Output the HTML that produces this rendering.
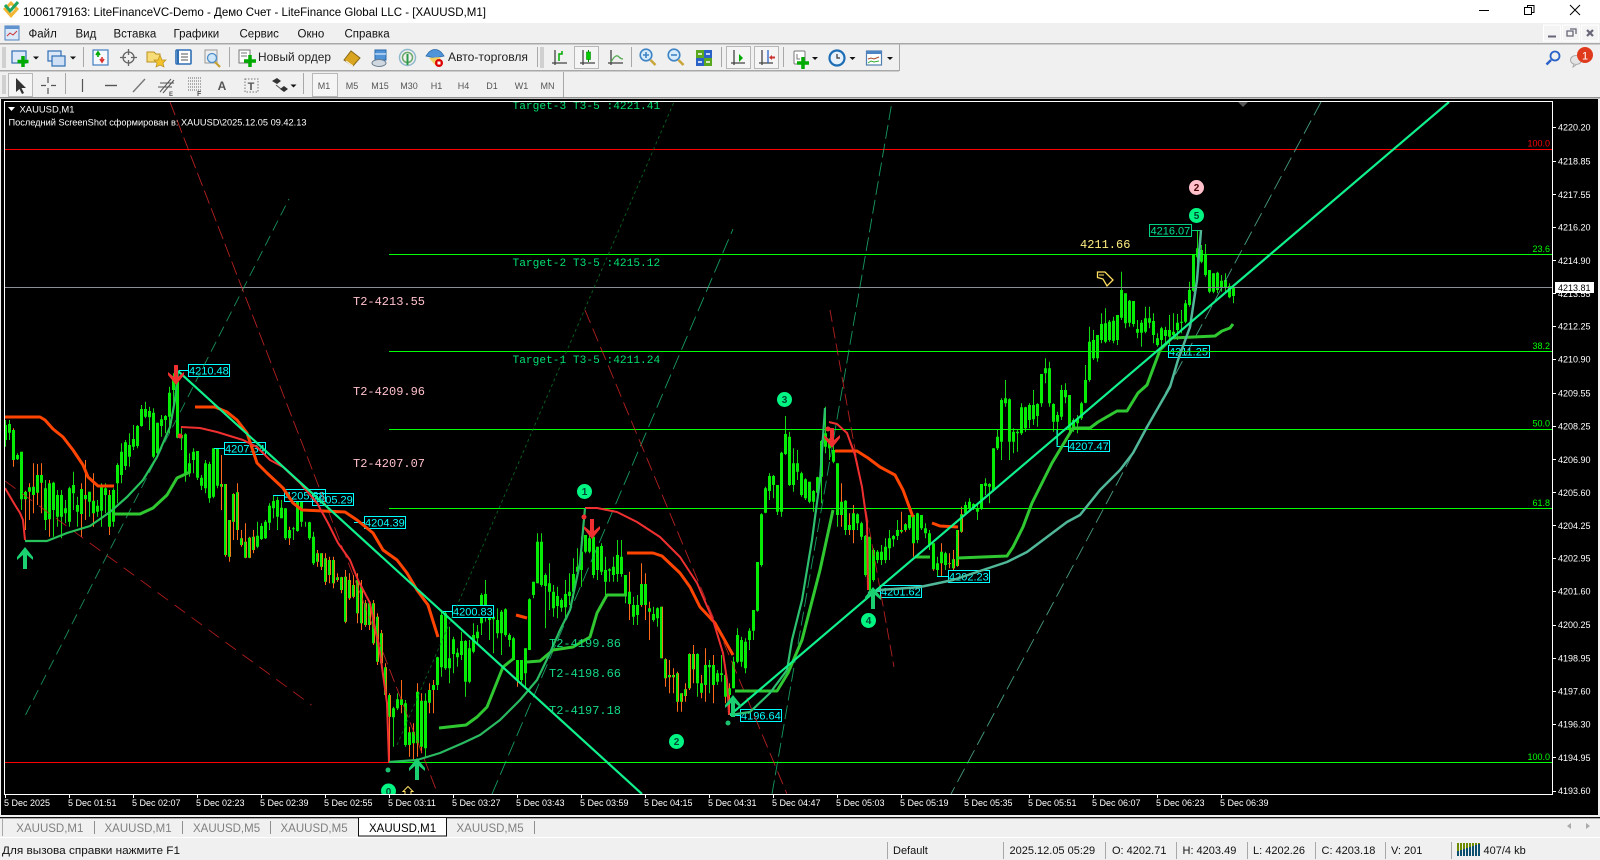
<!DOCTYPE html>
<html><head><meta charset="utf-8"><title>XAUUSD,M1</title>
<style>
html,body{margin:0;padding:0;width:1600px;height:860px;overflow:hidden;background:#f0f0f0}
svg{position:absolute;left:0;top:0;display:block}
text{font-family:"Liberation Sans","Noto Sans CJK SC",sans-serif;white-space:pre}
.ax text{font-size:9px;fill:#fff}
.mono text{font-family:"Liberation Mono","Noto Sans CJK SC",monospace;font-size:12px}
.lb{font-size:11px;fill:#0ff}
.bx{fill:#000;stroke:#0ff;stroke-width:1}
.cy{fill:none;stroke:#0ff;stroke-width:1}
.tb text{font-size:12px;fill:#222}
.tf text{font-size:9px;fill:#555;text-anchor:middle}
.tab{font-size:11.5px;fill:#808080}
.st text{font-size:11px;fill:#111}
.sep{stroke:#a8a8a8;stroke-width:1}
.num{font-size:10px;font-weight:bold;fill:#043;text-anchor:middle}
</style></head><body>
<svg width="1600" height="860" viewBox="0 0 1600 860" xmlns="http://www.w3.org/2000/svg">
<defs>
<clipPath id="pc"><rect x="5" y="102" width="1547" height="692"/></clipPath>
<polygon id="au" points="0,0 8,10 8,13 2,8 2,22 -2,22 -2,8 -8,13 -8,10"/>
<polygon id="ad" points="0,20 8,10 8,7 2,12 2,0 -2,0 -2,12 -8,7 -8,10"/>
</defs>
<!-- chrome backgrounds -->
<rect x="0" y="0" width="1600" height="23" fill="#fff"/>
<rect x="0" y="23" width="1600" height="75" fill="#f0f0f0"/>
<rect x="0" y="43" width="1600" height="1.5" fill="#a8a8a8"/>
<rect x="0" y="70" width="899" height="1.5" fill="#a8a8a8"/>
<rect x="899" y="44" width="1" height="27" fill="#a8a8a8"/>
<rect x="0" y="97" width="1600" height="1.5" fill="#909090"/>
<!-- title -->
<polygon points="11,1 19,9 11,18 3,9" fill="#f2b632"/><polygon points="11,5 15,9 11,13 7,9" fill="#fff"/>
<path d="M5 5L11 12M18 2L11 10" stroke="#1fa463" stroke-width="3" fill="none"/>
<text x="23" y="16" font-size="12" fill="#000" textLength="463" lengthAdjust="spacingAndGlyphs">1006179163: LiteFinanceVC-Demo - Демо Счет - LiteFinance Global LLC - [XAUUSD,M1]</text>
<path d="M1479 10.5H1489" stroke="#000"/>
<path d="M1524.5 7.5h7v7h-7zM1527.5 7V5.500h6.500v7h-2" fill="none" stroke="#000"/>
<path d="M1570 5L1580 15M1580 5L1570 15" stroke="#000"/>
<!-- menu -->
<rect x="5" y="26" width="14" height="14" fill="#dbe8f7" stroke="#4c80c0"/><path d="M7 36l3-3 3 2 4-4" stroke="#c33" fill="none"/><rect x="5" y="26" width="14" height="3" fill="#5f93d0"/>
<g font-size="11.500" fill="#111">
<text x="28.500" y="37.500">Файл</text><text x="75.500" y="37.500">Вид</text><text x="113.500" y="37.500">Вставка</text><text x="173.500" y="37.500">Графики</text><text x="239.500" y="37.500">Сервис</text><text x="297.500" y="37.500">Окно</text><text x="344.500" y="37.500">Справка</text>
</g>
<g fill="#f4f4f4" stroke="#fff"><rect x="1543.500" y="25" width="17" height="16"/><rect x="1562.500" y="25" width="17" height="16"/><rect x="1581.500" y="25" width="17" height="16"/></g>
<path d="M1548 36.500h8" stroke="#667" stroke-width="2"/><path d="M1567 31h6v5h-6zM1570 29h6v5" fill="none" stroke="#667" stroke-width="1.300"/><path d="M1587 30l6 6M1593 30l-6 6" stroke="#667" stroke-width="2.200"/>
<!-- toolbar 1 -->
<g fill="none">
<g stroke="#b0b0b0"><path d="M3 47v21M5 47v21M3 75v19M5 75v19"/></g>
<rect x="12" y="51" width="14" height="12" fill="#dde9f8" stroke="#2f6fb5" stroke-width="1.200"/>
<path d="M23 56v11M17.500 61.500h11" stroke="#0a0" stroke-width="3.500"/>
<path d="M33 56.500h6l-3 3z" fill="#111"/>
<rect x="48" y="51" width="13" height="10" fill="#dde9f8" stroke="#2f6fb5" stroke-width="1.200"/>
<rect x="52" y="56" width="13" height="10" fill="#cfe0f5" stroke="#2f6fb5" stroke-width="1.200"/>
<path d="M70 56.500h6l-3 3z" fill="#111"/>
<path class="sep" d="M83.500 47v20"/>
<rect x="93" y="50" width="15" height="15" fill="#f5f8fc" stroke="#3f7fc0" stroke-width="1.200"/>
<path d="M98 53v4M96 55l2-3 2 3" stroke="#0a0" stroke-width="1.600"/><path d="M102 61v-4M100 59l2 3 2-3" stroke="#d33" stroke-width="1.600"/>
<circle cx="128.500" cy="57.500" r="5.500" stroke="#666" stroke-width="1.300"/><path d="M128.500 49v6M128.500 60v6M120 57.500h6M131 57.500h6" stroke="#666" stroke-width="1.300"/>
<path d="M147 52h7l2 2h4v8h-13z" fill="#f8dc78" stroke="#b89020"/><polygon points="160,55 162,60 166,60 163,63 164,67 160,65 156,67 157,63 154,60 158,60" fill="#f3c22a" stroke="#b89020" stroke-width=".7"/>
<rect x="176" y="50" width="15" height="14" rx="1" fill="#fff" stroke="#2f6fb5" stroke-width="1.600"/><path d="M178 50v14" stroke="#2f6fb5" stroke-width="2"/><path d="M181 54h7M181 57h7M181 60h7" stroke="#555"/>
<rect x="205" y="50" width="12" height="13" fill="#eee" stroke="#999"/><circle cx="212" cy="58" r="4.500" fill="#cfe6f8" stroke="#4d8fca" stroke-width="1.300"/><path d="M215 62l5 5" stroke="#c8a030" stroke-width="2.200"/>
<path class="sep" d="M229.500 47v20"/>
<rect x="239" y="50" width="11" height="13" fill="#fff" stroke="#777"/><path d="M241 53h6M241 56h6" stroke="#777"/><path d="M250 55v12M244 61h12" stroke="#0a0" stroke-width="3.500"/>
</g>
<text x="258" y="61" font-size="12" fill="#222" textLength="73" lengthAdjust="spacingAndGlyphs">Новый ордер</text>
<g fill="none">
<polygon points="344,60 351,51 360,58 353,66" fill="#d9a520" stroke="#8a6a18"/><path d="M346 61l7 5" stroke="#fff"/>
<rect x="375" y="50" width="11" height="10" fill="#4f94d8" stroke="#2868a8"/><path d="M375 54h11" stroke="#fff"/><ellipse cx="379" cy="63" rx="7" ry="3.500" fill="#cfd8e0" stroke="#6a7c8c"/>
<circle cx="407.500" cy="57.500" r="8" stroke="#8fb8cc" stroke-width="1.500"/><circle cx="407.500" cy="57.500" r="5" stroke="#6aa86a" stroke-width="1.500"/><path d="M407.500 54v11" stroke="#2a9a4a" stroke-width="2"/>
<path d="M429 52q6-5 12 0l3 4-9 2-9-2z" fill="#4f94d8" stroke="#2868a8" stroke-width=".8"/><path d="M429 58l7 8 5-3-1-6z" fill="#f0d060"/><circle cx="439" cy="63" r="4" fill="#d00"/><rect x="437.500" y="61.500" width="3" height="3" fill="#fff"/>
</g>
<text x="448" y="61" font-size="12" fill="#222" textLength="80" lengthAdjust="spacingAndGlyphs">Авто-торговля</text>
<g fill="none">
<path class="sep" d="M537.500 47v20"/><path d="M541 47v21M543 47v21" stroke="#b0b0b0"/>
<!-- chart types -->
<path d="M555 50v15M552 63h15" stroke="#444" stroke-width="1.300"/><path d="M559 61v-7h3v-3" stroke="#0a0" stroke-width="1.500"/>
<rect x="574.500" y="46.500" width="24" height="22" fill="#f5f5f5" stroke="#b8b8b8"/>
<path d="M583 50v15M580 63h15" stroke="#444" stroke-width="1.300"/><path d="M588.500 50v12" stroke="#080"/><rect x="586.500" y="52" width="4" height="7.500" fill="#0c0" stroke="#080" stroke-width=".6"/>
<path d="M611 50v15M608 63h15" stroke="#444" stroke-width="1.300"/><path d="M611 62q5-9 8-5 2 2 4 2" stroke="#5a5" stroke-width="1.300"/>
<path class="sep" d="M631.500 47v20"/>
<circle cx="646" cy="55" r="5.800" fill="#d7ebfa" stroke="#3f84c4" stroke-width="1.600"/><path d="M643 55h6M646 52v6" stroke="#3f84c4" stroke-width="1.600"/><path d="M650.500 60l5 5" stroke="#c9a63a" stroke-width="2.600"/>
<circle cx="674" cy="55" r="5.800" fill="#d7ebfa" stroke="#3f84c4" stroke-width="1.600"/><path d="M671 55h6" stroke="#3f84c4" stroke-width="1.600"/><path d="M678.500 60l5 5" stroke="#c9a63a" stroke-width="2.600"/>
<rect x="696" y="50" width="8" height="8" fill="#5aa820"/><rect x="704" y="50" width="8" height="8" fill="#2a62c8"/><rect x="696" y="58" width="8" height="8" fill="#2a62c8"/><rect x="704" y="58" width="8" height="8" fill="#5aa820"/>
<path d="M698 54h4M706 54h4M698 62h4M706 62h4" stroke="#fff" stroke-width="1.500"/>
<path class="sep" d="M721.500 47v20"/>
<rect x="726.500" y="46.500" width="24" height="22" fill="#f5f5f5" stroke="#b8b8b8"/><path d="M734 50v15M731 63h14" stroke="#444" stroke-width="1.300"/><polygon points="739,54 743,58 739,62" fill="#0a0"/>
<rect x="754.500" y="46.500" width="24" height="22" fill="#f5f5f5" stroke="#b8b8b8"/><path d="M762 50v15M759 63h14" stroke="#444" stroke-width="1.300"/><path d="M768 50v13" stroke="#2a62c8" stroke-width="1.300"/><path d="M771 57.500h4" stroke="#c33" stroke-width="2"/><polygon points="769,57.500 772,55 772,60" fill="#c33"/>
<path class="sep" d="M783.500 47v20"/>
<rect x="794" y="51" width="11" height="13" rx="1" fill="#fff" stroke="#777"/><path d="M797 54v5h3" stroke="#777"/><path d="M803 57v12M797 63h12" stroke="#0a0" stroke-width="3.500"/>
<path d="M812 57h6l-3 3z" fill="#111"/>
<circle cx="837" cy="58" r="7.500" fill="#e6f1fb" stroke="#1c6db5" stroke-width="2.200"/><path d="M837 54v4h3" stroke="#333" stroke-width="1.200"/>
<path d="M849.500 57h6l-3 3z" fill="#111"/>
<rect x="866.500" y="51" width="15" height="14" fill="#fff" stroke="#4f7faf" stroke-width="1.200"/><rect x="866.500" y="51" width="15" height="3" fill="#4f84c4"/><path d="M868 59l3-1 3 1 5-2" stroke="#a42"/><path d="M868 63l3-2 3 1 5-1" stroke="#3a3"/>
<path d="M887 57h6l-3 3z" fill="#111"/>
<!-- search + chat -->
<circle cx="1555" cy="56" r="4.500" stroke="#2a62c8" stroke-width="1.800"/><path d="M1551 60l-4.500 4.500" stroke="#2a62c8" stroke-width="2.500"/>
<ellipse cx="1576" cy="60" rx="5.500" ry="4.500" fill="#e4e4e4" stroke="#aaa"/><path d="M1574 64l-1 3 3-2" fill="#e4e4e4" stroke="#aaa"/>
<circle cx="1585" cy="55" r="8" fill="#e03a1c"/>
</g>
<text x="1585" y="59.500" font-size="11" fill="#fff" text-anchor="middle">1</text>
<!-- toolbar 2 -->
<g fill="none">
<rect x="8.500" y="73.500" width="24" height="23" fill="#f5f5f5" stroke="#b8b8b8"/>
<polygon points="16,78 16,92 19.500,89 22,94 24,93 21.500,88 26,88" fill="#333"/>
<path d="M48 77v6M48 88v6M41 85.500h5M51 85.500h5" stroke="#555" stroke-width="1.200"/>
<path class="sep" d="M65.500 73v21"/>
<path d="M82.500 79v13" stroke="#555" stroke-width="1.200"/>
<path d="M105 85.500h12" stroke="#555" stroke-width="1.400"/>
<path d="M133 92l12-13" stroke="#777" stroke-width="1.400"/>
<path d="M160 92l11-13M163 93l11-13M158 87h14M160 83h14" stroke="#555"/>
<path d="M188 78h14M188 81h14M188 84h14M188 87h14M188 90h14" stroke="#666" stroke-dasharray="1 1"/>
<rect x="245" y="79" width="13" height="13" stroke="#777" stroke-dasharray="1.500 1.500"/>
<path d="M272 81l5-3 4 3-4 3zM280 89l4-3 4 3-4 3z" fill="#333"/><path d="M276 85l5 4" stroke="#555"/>
<path d="M290.500 84.500h6l-3 3z" fill="#111"/>
<path class="sep" d="M303.500 73v21"/>
<rect x="312.500" y="73.500" width="25" height="23" fill="#f5f5f5" stroke="#b8b8b8"/>
<path class="sep" d="M563.500 72v25"/>
</g>
<text x="169" y="96" font-size="6" fill="#555" font-weight="bold">E</text>
<text x="197" y="96" font-size="7" fill="#555" font-weight="bold">F</text>
<text x="222" y="90" font-size="12" fill="#555" font-weight="bold" text-anchor="middle">A</text>
<text x="251" y="90" font-size="11" fill="#555" font-weight="bold" text-anchor="middle">T</text>
<g class="tf"><text x="324" y="89">M1</text><text x="352" y="89">M5</text><text x="380" y="89">M15</text><text x="409" y="89">M30</text><text x="436.500" y="89">H1</text><text x="463.500" y="89">H4</text><text x="492" y="89">D1</text><text x="521.500" y="89">W1</text><text x="547.500" y="89">MN</text></g>

<!-- chart window -->
<rect x="1" y="99" width="1597" height="716" fill="#000"/>
<path d="M4.500 101.500H1552.500V794.500H4.500Z" fill="none" stroke="#fff"/>
<g id="chart" clip-path="url(#pc)">
<g id="cd"></g>
<!-- connectors -->
<g class="cy">
<path d="M179 370.500H188"/><path d="M214 448.500H224"/><path d="M273 495.500H284"/><path d="M354 522.500H364"/><path d="M443 611.500H452"/><path d="M730 715.500H740"/><path d="M870 591.500H880"/><path d="M937 576.500H948"/><path d="M1057 430V446.500H1068"/><path d="M1159 351.500H1168"/>
</g>
<path d="M1191 230.500H1201" stroke="#00d080" fill="none"/>
<!-- boxes -->
<g>
<rect class="bx" x="188.500" y="364.500" width="41" height="12"/><text class="lb" x="189" y="374.500">4210.48</text>
<rect class="bx" x="224.500" y="442.500" width="41" height="12"/><text class="lb" x="225" y="452.500">4207.34</text>
<rect class="bx" x="284.500" y="489.500" width="41" height="12"/><text class="lb" x="285" y="499.500">4205.88</text>
<rect class="bx" x="312.500" y="493.500" width="41" height="12" style="fill-opacity:0"/><text class="lb" x="313" y="503.500">4205.29</text>
<rect class="bx" x="364.500" y="516.500" width="41" height="12"/><text class="lb" x="365" y="526.500">4204.39</text>
<rect class="bx" x="452.500" y="605.500" width="41" height="12"/><text class="lb" x="453" y="615.500">4200.83</text>
<rect class="bx" x="740.500" y="709.500" width="41" height="12"/><text class="lb" x="741" y="719.500">4196.64</text>
<rect class="bx" x="880.500" y="585.500" width="41" height="12"/><text class="lb" x="881" y="595.500">4201.62</text>
<rect class="bx" x="948.500" y="570.500" width="41" height="12"/><text class="lb" x="949" y="580.500">4202.23</text>
<rect class="bx" x="1068.500" y="440.500" width="41" height="11"/><text class="lb" x="1069" y="450">4207.47</text>
<rect class="bx" x="1168.500" y="345.500" width="41" height="12"/><text class="lb" x="1169" y="355.500">4211.25</text>
<rect x="1149.500" y="224.500" width="42" height="12" fill="#000" stroke="#00d080"/><text x="1150.500" y="234.500" font-size="11" fill="#00e090">4216.07</text>
</g>
<!-- horizontal levels -->
<g fill="none" stroke-width="1.200" shape-rendering="crispEdges">
<path d="M4 149.500H1552" stroke="#f00"/>
<path d="M389 254.500H1552M389 351.500H1552M389 429.500H1552M389 508.500H1552M389 762.500H1552" stroke="#0f0"/>
<path d="M4 762.500H389" stroke="#f00"/>
<path d="M4 287.500H1552" stroke="#8a8f98"/>
</g>
<!-- dashed trends -->
<g fill="none" stroke-width=".9" stroke-opacity=".8">
<path d="M25.500 715L289 199" stroke="#1fb070" stroke-dasharray="11 6"/>
<path d="M170 102L437 792" stroke="#e02828" stroke-dasharray="14 5"/>
<path d="M5 481L311.500 705" stroke="#d82020" stroke-dasharray="13 8"/>
<path d="M397 745L674 102" stroke="#0a7a28" stroke-dasharray="3 3"/>
<path d="M492 794L733 229" stroke="#1cc078" stroke-dasharray="15 6"/>
<path d="M772 794L892 102" stroke="#1cc078" stroke-dasharray="14 5"/>
<path d="M830 310L894 667" stroke="#e02828" stroke-dasharray="12 5"/>
<path d="M585 310L787 794" stroke="#e02828" stroke-dasharray="14 6"/>
<path d="M1321 102L951 794" stroke="#58c0a0" stroke-dasharray="15 6"/>
</g>
<!-- orange MA -->
<g fill="none" stroke="#ff4500" stroke-width="3" stroke-linejoin="round">
<polyline points="5,417 40,417 45,420 53,429 63,437 73,450 83,465 88,477 98,486 114,486"/>
<polyline points="195,407 215,407 227,412 237,420 247,433 257,463 267,473 283,488 293,503 302,510 345,512 357,520 373,533 383,550 397,560 407,573 417,590 428,605 438,637"/>
<polyline points="516,615 527,618"/>
<polyline points="627,553 653,553 662,556 680,573 690,587 700,607 715,623 733,655"/>
<polyline points="835,451 857,451 868,458 880,467 895,475 903,490 913,517"/>
<polyline points="932,523 940,526 958,527"/>
</g>
<!-- red thin -->
<g fill="none" stroke="#f03030" stroke-width="2" stroke-linejoin="round">
<polyline points="5,488 15,505 20,513 23,520 25,540"/>
<polyline points="181,427 200,428 217,432 243,440 257,447 270,460 283,467 300,483 317,503 328,523 338,543 350,560 358,580 370,603 380,653 387,703 389,763"/>
<polyline points="585,508 597,508 617,512 637,522 660,537 680,557 697,583 713,620 723,653 727,680 729,715"/>
<polyline points="829,422 837,424 847,433 855,455 862,487 867,523 868,590"/>
</g>
<!-- lime MA -->
<g fill="none" stroke="#30c830" stroke-width="3" stroke-linejoin="round">
<polyline points="113,514 140,514 153,508 167,495 177,478 190,472"/>
<polyline points="439,728 466,725 477,717 487,707 495,687 503,667 513,659"/>
<polyline points="527,662 540,661 553,650 573,647 590,637 597,613 607,595 627,595"/>
<polyline points="735,691 777,691 788,673 802,640 820,570 833,510"/>
<polyline points="915,557 930,557"/>
<polyline points="958,558 1007,556 1013,547 1023,527 1032,503 1040,487 1052,463 1073,428 1090,428 1098,422 1117,411 1127,411 1138,393 1147,385 1160,350 1172,338 1215,336 1222,331 1230,328 1233,324"/>
</g>
<!-- teal curves -->
<g fill="none" stroke-width="2.200" stroke-linejoin="round">
<polyline stroke="#28c25c" points="25,541 47,541 67,533 90,526 110,512 127,497 143,480 157,457 170,427 175,400 178,371"/>
<polyline stroke="#2abb62" points="389,762 417,760 440,753 463,743 480,735 500,720 520,700 537,680 550,653 560,630 570,610 580,563 585,508"/>
<polyline stroke="#2cc070" points="730,715 750,712 770,693 787,670 792,640 802,600 812,540 820,480 825,408"/>
<polyline stroke="#50b898" stroke-width="2.500" points="868,593 880,590 920,587 953,580 1007,562 1027,552 1047,537 1067,522 1080,515 1100,490 1120,470 1133,453 1147,427 1170,387 1178,360 1190,327 1197,280 1201,230"/>
</g>
<!-- straight trends -->
<g fill="none" stroke="#10f08c" stroke-width="2.200">
<path d="M178 371L642 794"/><path d="M730 715L1449 102"/>
</g>
<!-- arrows -->
<g fill="#1bd070">
<use href="#au" x="25" y="547"/><use href="#au" x="417" y="758"/><use href="#au" x="733" y="695"/><use href="#au" x="873" y="587"/>
</g>
<g fill="#f03030">
<use href="#ad" x="176" y="365"/><use href="#ad" x="592" y="519"/><use href="#ad" x="832" y="428"/>
<circle cx="180" cy="436" r="2.500"/><circle cx="584" cy="517" r="2.500"/><circle cx="828" cy="429" r="2.500"/>
</g>
<g fill="#1bc070"><circle cx="388" cy="770" r="2.500"/><circle cx="728" cy="723" r="2.500"/></g>
<!-- number circles -->
<g fill="#00f582">
<circle cx="584.500" cy="491.500" r="7.500"/><circle cx="676.500" cy="741.500" r="7.500"/><circle cx="784.500" cy="399.500" r="7.500"/><circle cx="868.500" cy="620.500" r="7.500"/><circle cx="1196.500" cy="215.500" r="7.500"/><circle cx="388.500" cy="791" r="7.500"/>
</g>
<circle cx="1196.500" cy="187.500" r="7.500" fill="#ffc0cb"/>
<g class="num">
<text x="584.500" y="495">1</text><text x="676.500" y="745">2</text><text x="784.500" y="403">3</text><text x="868.500" y="624">4</text><text x="1196.500" y="219">5</text><text x="1196.500" y="191" style="fill:#400">2</text><text x="388.500" y="795">0</text>
</g>
<polygon points="408,786.500 413,791.500 411,791.500 411,796 405,796 405,791.500 403,791.500" fill="none" stroke="#ffe060"/>
<polygon points="1097.500,272 1105,272 1113,280 1107,286 1103,279 1097.500,277.500" fill="none" stroke="#ffe060" stroke-width="1.300"/>
<path d="M1099 275H1104" stroke="#ffe060"/>
<polygon points="1238,102 1248,102 1243,107" fill="#555"/>
<!-- chart text -->
<g class="mono">
<text x="512.500" y="109" fill="#00e070" style="font-size:11.200px">Target-3 T3-5 :4221.41</text>
<text x="512.500" y="266" fill="#00e070" style="font-size:11.200px">Target-2 T3-5 :4215.12</text>
<text x="512.500" y="363" fill="#00e070" style="font-size:11.200px">Target-1 T3-5 :4211.24</text>
<text x="353" y="305" fill="#ffc0cb">T2-4213.55</text>
<text x="353" y="395" fill="#ffc0cb">T2-4209.96</text>
<text x="353" y="467" fill="#ffc0cb">T2-4207.07</text>
<text x="549" y="647" fill="#14d884">T2-4199.86</text>
<text x="549" y="677" fill="#14d884">T2-4198.66</text>
<text x="549" y="714" fill="#14d884">T2-4197.18</text>
<text x="1080" y="248" fill="#ffee80">4211.66</text>
</g>
<!-- fib labels -->
<g font-size="9" text-anchor="end" fill="#0f0">
<text x="1550" y="146.500" fill="#f00">100.0</text><text x="1550" y="252">23.6</text><text x="1550" y="349">38.2</text><text x="1550" y="426.500">50.0</text><text x="1550" y="506">61.8</text><text x="1550" y="760">100.0</text>
</g>
</g>
<!-- left header -->
<polygon points="8,107 15,107 11.500,111" fill="#fff"/>
<text x="19.500" y="112.500" font-size="9.500" fill="#fff" textLength="55" lengthAdjust="spacingAndGlyphs">XAUUSD,M1</text>
<text x="8.500" y="125.500" font-size="9" fill="#fff" textLength="298" lengthAdjust="spacingAndGlyphs">Последний ScreenShot сформирован в: XAUUSD\2025.12.05 09.42.13</text>
<!-- price axis -->
<g class="ax">
<text x="1558" y="130.500">4220.20</text><text x="1558" y="164.500">4218.85</text><text x="1558" y="198">4217.55</text><text x="1558" y="230.500">4216.20</text><text x="1558" y="264">4214.90</text><text x="1558" y="297">4213.55</text><text x="1558" y="329.500">4212.25</text><text x="1558" y="362.500">4210.90</text><text x="1558" y="396.500">4209.55</text><text x="1558" y="429.500">4208.25</text><text x="1558" y="463">4206.90</text><text x="1558" y="496">4205.60</text><text x="1558" y="529">4204.25</text><text x="1558" y="561.500">4202.95</text><text x="1558" y="594.500">4201.60</text><text x="1558" y="628">4200.25</text><text x="1558" y="661.500">4198.95</text><text x="1558" y="694.500">4197.60</text><text x="1558" y="727.500">4196.30</text><text x="1558" y="761">4194.95</text><text x="1558" y="794">4193.60</text>
</g>
<path d="M1553 127.500h3M1553 161.500h3M1553 194.500h3M1553 227.500h3M1553 260.500h3M1553 293.500h3M1553 326.500h3M1553 359.500h3M1553 393.500h3M1553 426.500h3M1553 459.500h3M1553 492.500h3M1553 525.500h3M1553 558.500h3M1553 591.500h3M1553 625.500h3M1553 658.500h3M1553 691.500h3M1553 724.500h3M1553 757.500h3M1553 791.500h3" stroke="#fff"/>
<rect x="1555" y="282" width="39" height="11" fill="#fff"/>
<text x="1558" y="291" font-size="9" fill="#000">4213.81</text>
<!-- time axis -->
<path d="M5.500 794v4M69.500 794v4M133.500 794v4M197.500 794v4M261.500 794v4M325.500 794v4M389.500 794v4M453.500 794v4M517.500 794v4M581.500 794v4M645.500 794v4M709.500 794v4M773.500 794v4M837.500 794v4M901.500 794v4M965.500 794v4M1029.500 794v4M1093.500 794v4M1157.500 794v4M1221.500 794v4" stroke="#fff"/>
<g class="ax">
<text x="4" y="806">5 Dec 2025</text><text x="68" y="806">5 Dec 01:51</text><text x="132" y="806">5 Dec 02:07</text><text x="196" y="806">5 Dec 02:23</text><text x="260" y="806">5 Dec 02:39</text><text x="324" y="806">5 Dec 02:55</text><text x="388" y="806">5 Dec 03:11</text><text x="452" y="806">5 Dec 03:27</text><text x="516" y="806">5 Dec 03:43</text><text x="580" y="806">5 Dec 03:59</text><text x="644" y="806">5 Dec 04:15</text><text x="708" y="806">5 Dec 04:31</text><text x="772" y="806">5 Dec 04:47</text><text x="836" y="806">5 Dec 05:03</text><text x="900" y="806">5 Dec 05:19</text><text x="964" y="806">5 Dec 05:35</text><text x="1028" y="806">5 Dec 05:51</text><text x="1092" y="806">5 Dec 06:07</text><text x="1156" y="806">5 Dec 06:23</text><text x="1220" y="806">5 Dec 06:39</text>
</g>
<!-- tabs -->
<rect x="0" y="815" width="1600" height="45" fill="#f0f0f0"/>
<rect x="0" y="817" width="1600" height="1.300" fill="#111"/>
<rect x="0" y="837" width="1600" height="1" fill="#fff"/>
<rect x="358.500" y="817.500" width="88" height="18.500" fill="#fff" stroke="#111"/>
<path d="M94.500 821v13M182.500 821v13M270.500 821v13M534.500 821v13" stroke="#909090"/>
<path d="M2.500 819v17" stroke="#a8a8a8"/>
<text class="tab" x="16.300" y="832">XAUUSD,M1</text><text class="tab" x="104.500" y="832">XAUUSD,M1</text><text class="tab" x="193" y="832">XAUUSD,M5</text><text class="tab" x="280.500" y="832">XAUUSD,M5</text><text class="tab" x="369" y="832" style="fill:#000">XAUUSD,M1</text><text class="tab" x="456.500" y="832">XAUUSD,M5</text>
<polygon points="1571,823 1567,826 1571,829" fill="#aaa"/><polygon points="1586,823 1590,826 1586,829" fill="#aaa"/>
<!-- status -->
<g class="st">
<text x="2" y="854" textLength="178" lengthAdjust="spacingAndGlyphs">Для вызова справки нажмите F1</text>
<text x="893" y="854">Default</text><text x="1009.500" y="854">2025.12.05 05:29</text><text x="1112" y="854">O: 4202.71</text><text x="1182.500" y="854">H: 4203.49</text><text x="1253" y="854">L: 4202.26</text><text x="1321.500" y="854">C: 4203.18</text><text x="1391" y="854">V: 201</text><text x="1483.500" y="854">407/4 kb</text>
</g>
<path d="M887.500 842v17M1003.500 842v17M1105.500 842v17M1176.500 842v17M1247.500 842v17M1315.500 842v17M1385.500 842v17M1451.500 842v17" stroke="#a8a8a8"/>
<g stroke-width="2" fill="none">
<path d="M1458 843v8M1461 843v7M1464 843v6M1467 843v5M1470 843v4M1473 843v3M1476 843v2M1479 843v1" stroke="#6e8b00"/>
<path d="M1458 851v5M1461 850v6M1464 849v7M1467 848v8M1470 847v9M1473 846v10M1476 845v11M1479 844v12" stroke="#0d4f6e"/>
</g>
</svg>
<script>
(function(){
var S=[
[340,0,"240,255,300,320 240,252,278,300 o265,270,360,380 340,345,358,360 335,335,478,510 o452,455,478,570 o430,442,455,540 o370,440,465,520 o372,405,458,495 o370,405,428,520 420,445,540,570 o420,430,538,590 425,428,510,590 450,465,530,560 450,465,530,595 480,505,520,550 440,445,545,560 395,435,460,510 470,495,515,560 o430,447,522,590 o360,465,478,540 455,455,485,530 o400,482,520,560 480,497,515,530 430,442,512,560 430,445,465,520 o450,465,560,585 445,450,545,560 370,375,430,490 310,335,405,430 300,307,378,390 280,315,350,380 255,297,320,330 255,258,318,325 195,207,258,260 185,207,230,235 200,213,232,270 205,218,350,355 248,248,340,350 225,238,258,290 225,228,240,280 140,158,230,280 100,120,150,200 100,125,293,295 265,285,295,330 280,283,400,425 340,370,400,410 325,335,360,400 333,333,413,420 405,413,437,450 360,370,445,460 365,372,475,488 325,325,470,475 325,325,437,445 o345,432,440,510 432,432,645,650 540,540,650,665 o460,462,545,600 430,457,570,600 570,595,615,620 550,605,653,655 590,593,653,655 570,590,630,640 545,587,620,625 550,558,597,600 540,545,595,597 490,497,548,570 465,483,505,535 470,480,530,570 480,503,535,535 505,505,595,600 o560,570,595,615 560,565,568,600 470,483,573,575 480,482,545,560 545,547,547,560 545,547,595,600 575,590,670,675 630,640,665,680 640,640,680,690 640,655,725,735 650,660,705,730 650,660,730,745 700,712,720,725 710,712,750,760"],
[580,85,"-30,-10,125,130 -20,0,55,60 -15,15,50,55 -20,0,100,130 0,20,130,150 60,70,135,140 65,70,135,150 60,70,190,195 o100,110,245,255 o150,160,250,260 250,262,345,345 340,345,410,545 380,385,412,500 340,358,385,390 o300,358,375,400 360,370,495,500 o440,457,495,530 o430,455,490,540 o310,335,490,530 o340,362,500,520 340,362,505,530 o310,330,368,400 o300,315,330,400 230,232,315,330 90,105,262,290 95,100,265,270 140,235,265,310 170,178,222,280 205,218,232,260 155,183,225,240 180,183,305,350 180,205,305,310 130,165,215,220 135,155,175,190 40,45,130,165 0,42,100,125 100,110,120,180 95,110,118,220 85,120,160,175 90,95,160,225 85,88,165,170 160,165,180,200 170,175,240,240 o240,240,300,320 240,240,300,310 205,205,280,320 55,58,210,210"],
[470,132,"335,335,375,385 190,215,340,340 190,215,345,350 310,315,348,475 280,340,365,420 345,365,415,440 350,378,408,445 385,390,413,425 330,372,412,450 310,365,378,405 265,312,365,385 235,290,305,320 200,245,300,350 195,195,245,250 195,205,245,250 190,200,315,325 230,230,300,330 220,228,305,315 260,300,335,380 295,298,302,335 260,290,315,335 210,255,312,335 210,260,312,320 315,315,375,400 o305,365,402,450 380,405,440,465 375,405,435,465 o280,342,405,410 o310,342,405,450 o395,415,425,510 410,432,450,455 412,415,445,470 410,410,565,565"],
[580,165,"235,238,295,320 o240,285,292,340 o265,285,292,340 o275,280,365,395 340,340,365,395 o310,328,348,365 220,222,325,330 195,222,268,310 220,222,310,350 o285,310,338,355 o205,255,315,365 240,255,262,340 o225,255,315,370 270,280,305,315 225,280,285,305 o275,285,350,370 o310,325,345,405 230,245,325,325 145,165,245,250 170,180,245,260 175,185,265,280 145,152,180,210 90,90,152,180 -54,-54,92,95"],
[380,189,"400,403,555,560 320,325,398,400 280,288,333,360 285,288,315,355 315,315,395,405 215,218,395,410 108,162,222,225 155,170,315,318 205,250,315,335 210,250,275,300 275,280,345,350 295,298,355,360 305,305,365,370 330,333,365,395 290,292,338,340 180,183,290,370 80,160,200,220 175,180,205,240 195,210,245,250 250,250,405,440 o310,365,405,440 360,362,450,465 o400,435,450,465 o375,400,450,490 400,403,430,450 425,430,470,480 465,468,585,590 470,470,630,635 505,510,600,605 510,515,540,550 495,515,540,555 475,500,540,550 450,475,505,540 465,468,478,500 420,450,468,480 o395,450,455,460 o430,433,450,455 405,405,445,450 o405,405,490,530 398,400,480,490 405,405,445,450 430,445,460,475 450,460,495,510 o490,490,568,572 530,550,570,590 o490,515,550,590 515,520,555,570 520,550,552,565 510,538,565,570 o450,450,558,560 380,403,455,458 365,375,400,405 355,365,385,390 370,372,385,390 370,387,395,420 312,312,385,390 295,310,318,345 310,312,320,370 205,205,330,335 150,170,205,210 55,60,185,240 0,55,70,80 55,58,185,240 145,155,185,220 150,155,160,215 70,82,160,165 80,82,145,155 70,75,120,145 30,75,118,135 70,72,108,140"],
[170,259,"612,612,700,710 565,595,610,640 575,595,700,710 700,702,755,785 725,735,755,825 645,660,740,750 640,660,682,700 675,675,780,790 745,750,775,785 735,745,760,790 695,700,745,750 585,630,698,700 470,515,630,635 480,510,565,570 495,495,565,575 430,462,510,520 415,460,515,520 450,455,510,515 440,452,512,520 435,435,510,525 305,360,443,450 370,370,460,475 390,392,458,470 393,393,462,470 450,477,488,505 450,458,488,530 410,445,485,490 410,445,458,475 430,453,495,520 490,505,525,530 470,475,510,530 470,480,498,525 435,480,500,530 430,485,495,505 432,458,480,510 420,455,458,490 390,400,455,460 335,360,405,410 255,255,362,365 182,235,262,290 225,240,275,280 222,255,315,320 300,300,365,370 310,310,365,370 305,308,360,370 315,332,352,365 310,330,352,370 340,348,382,385 350,352,378,400"]];
var R=[[54,62],[78,96],[164,172],[236,239]];
function inR(i){return R.some(function(r){return i>=r[0]&&i<=r[1]})}
var wg="",wo="",b="",e="";
S.forEach(function(s){s[2].split(" ").forEach(function(q,k){
var o=q.charAt(0)=="o";if(o)q=q.slice(1);
var v=q.split(",").map(function(n){return (s[0]+n/3).toFixed(1)});
var i=s[1]+k,x=5+4*i,t=inR(i);
var w="M"+(x+.5)+" "+v[0]+"V"+v[3];
if(o||t)wo+=w;else wg+=w;
b+="M"+(x+.5)+" "+v[1]+"V"+v[2];
if(t)e+="M"+(x+1.5)+" "+v[1]+"V"+v[2];
})});
document.getElementById("cd").innerHTML='<path d="'+wg+'" stroke="#14d814" fill="none"/><path d="'+wo+'" stroke="#ff6a1a" fill="none"/><path d="'+b+'" stroke="#06ec06" stroke-width="3" fill="none"/><path d="'+e+'" stroke="#e8801a" fill="none"/>';
})();
</script>
</body></html>
